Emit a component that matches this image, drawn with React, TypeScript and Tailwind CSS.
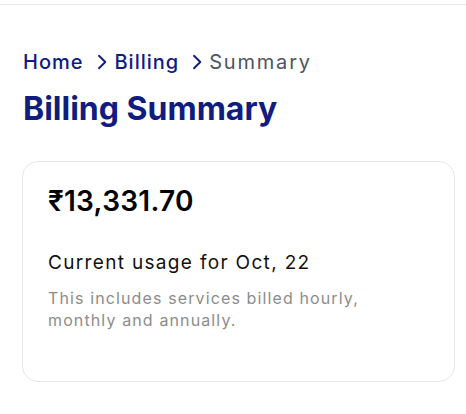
import React from "react";

function Chevron() {
  return (
    <svg width="10" height="16" viewBox="0 0 10 16" fill="none" stroke="currentColor" strokeWidth="1.9" strokeLinecap="round" strokeLinejoin="round">
      <path d="M2 1.8 L8.3 8 L2 14.2" />
    </svg>
  );
}

export default function App() {
  return (
    <div className="min-h-[414px] w-[466px] bg-white" style={{ fontFamily: "Inter, 'Open Sans', sans-serif" }}>
      <div className="h-[4px]" />
      <div className="h-px bg-[#e5e7eb]" />
      <div className="pl-[22px] pr-[11px] pt-[44px]">
        <nav className="flex items-center text-[20px] leading-[26px] tracking-[0.05em]">
          <span className="pl-px font-medium text-[#101c80]">Home</span>
          <span className="ml-[14px] mr-[7px] text-[#101c80]"><Chevron /></span>
          <span className="font-medium text-[#101c80]">Billing</span>
          <span className="ml-[13px] mr-[7px] text-[#101c80]"><Chevron /></span>
          <span className="tracking-[0.09em] text-[#4b5563]">Summary</span>
        </nav>
        <h1 className="mt-[16px] pl-px text-[32px] font-bold leading-[36px] text-[#101c80]">Billing Summary</h1>
        <div className="mt-[34px] h-[221px] rounded-[16px] border border-[#e5e7eb] px-[25px] pt-[22px]">
          <div className="text-[28px] font-semibold leading-[34px] tracking-[0.01em] text-black">₹13,331.70</div>
          <div className="mt-[32px] text-[19px] leading-[26px] tracking-[0.07em] text-[#111]">Current usage for Oct, 22</div>
          <p className="mt-[11px] text-[16px] leading-[22px] tracking-[0.07em] text-[#8c8c8c]">
            This includes services billed hourly,
            <br />
            monthly and annually.
          </p>
        </div>
      </div>
    </div>
  );
}
